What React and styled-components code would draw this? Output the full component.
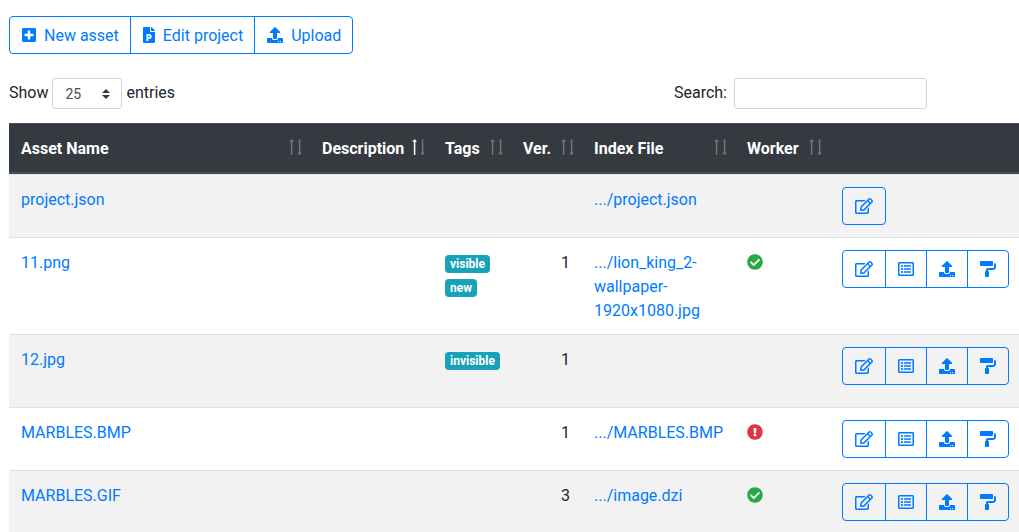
import React, { useState } from "react";
import styled, { createGlobalStyle, css } from "styled-components";
import {
  FaPlusSquare,
  FaFilePowerpoint,
  FaUpload,
  FaRegEdit,
  FaRegListAlt,
  FaPaintRoller,
  FaCheckCircle,
  FaExclamationCircle,
} from "react-icons/fa";

const GlobalStyle = createGlobalStyle`
  *, *::before, *::after { box-sizing: border-box; }
  html { scrollbar-width: none; }
  body {
    margin: 0;
    background: #fff;
    color: #212529;
    font: 400 16px/24px Roboto, "Liberation Sans", sans-serif;
  }
  button, input, select { font-family: inherit; }
`;

const Page = styled.main`
  padding: 16px 0 0 9px;
`;

const ButtonGroup = styled.div`
  display: inline-flex;
  vertical-align: top;
`;

const OutlineButton = styled.button`
  display: flex;
  align-items: center;
  gap: 8px;
  height: 38px;
  margin: 0;
  padding: 0 12px;
  border: 1px solid #007bff;
  background: transparent;
  color: #007bff;
  font-size: 16px;
  line-height: 24px;
  white-space: nowrap;
  cursor: pointer;

  & + & { margin-left: -1px; }
  &:first-child { border-top-left-radius: 4px; border-bottom-left-radius: 4px; }
  &:last-child { border-top-right-radius: 4px; border-bottom-right-radius: 4px; }

  svg { flex: none; width: ${(p) => p.$icon || 16}px; height: 16px; }
`;

const ToolbarButton = styled(OutlineButton)`
  padding-right: 11px;
`;

const ButtonText = styled.span`
  padding-top: 2px;
`;

const Controls = styled.div`
  display: flex;
  justify-content: space-between;
  align-items: center;
  margin: 24px 0 14px;
  padding-right: 92px;
`;

const ControlLabel = styled.label`
  display: flex;
  align-items: center;
  gap: ${(p) => p.$gap}px;
`;

const LabelText = styled.span`
  padding-bottom: 2px;
`;

const fieldStyle = css`
  height: 31px;
  border: 1px solid #ced4da;
  border-radius: 3px;
  background: #fff;
  color: #495057;
  font-size: 14px;
`;

const SelectBox = styled.span`
  display: grid;
  align-items: center;

  > * { grid-area: 1 / 1; }
  svg { justify-self: end; margin-right: 12px; pointer-events: none; }
`;

const LengthSelect = styled.select`
  ${fieldStyle}
  appearance: none;
  width: 70px;
  padding: 0 28px 0 12px;
`;

const SearchInput = styled.input`
  ${fieldStyle}
  width: 193px;
  padding: 4px 8px;
`;

const Table = styled.table`
  width: 100%;
  table-layout: fixed;
  border-collapse: separate;
  border-spacing: 0;
`;

const Col = styled.col`
  width: ${(p) => (p.$width ? `${p.$width}px` : "auto")};
`;

const HeadCell = styled.th`
  padding: 13px 7px 11px 12px;
  border-top: 1px solid #454d55;
  border-bottom: 2px solid #454d55;
  background: #343a40;
  color: #fff;
  text-align: left;
`;

const SortButton = styled.button`
  display: flex;
  justify-content: space-between;
  align-items: center;
  width: 100%;
  padding: 0;
  border: 0;
  background: none;
  color: inherit;
  font-size: 16px;
  font-weight: 700;
  line-height: 24px;
  white-space: nowrap;
  cursor: pointer;

  svg { flex: none; }
`;

const Row = styled.tr`
  background: #fff;
  &:nth-child(odd) { background: #f2f2f2; }
`;

const Cell = styled.td`
  padding: 13px 12px 11px;
  border-top: 1px solid #dee2e6;
  vertical-align: top;
  text-align: ${(p) => (p.$numeric ? "right" : "left")};
`;

const ActionCell = styled(Cell)`
  padding: 12px 10px 12px 12px;
`;

const Link = styled.a`
  color: #007bff;
  text-decoration: none;
`;

const TagList = styled.div`
  display: flex;
  flex-direction: column;
  align-items: flex-start;
  gap: 6px;
  min-height: 48px;
  padding-top: 4px;
`;

const Tag = styled.span`
  padding: 3px 5px;
  border-radius: 4px;
  background: #17a2b8;
  color: #fff;
  font-size: 12px;
  font-weight: 700;
  line-height: 12px;
`;

const Status = styled.span`
  display: flex;
  align-items: center;
  height: 22px;
  color: ${(p) => (p.$ok ? "#28a745" : "#dc3545")};
`;

function SortArrows({ active }) {
  return (
    <svg width="15" height="20" viewBox="0 0 15 20" fill="none" stroke="#fff" strokeWidth="1.5" aria-hidden="true">
      <g opacity={active ? 1 : 0.3}>
        <path d="M3.6 16V1" />
        <path d="M1.4 3L3 0.6H4.2L5.8 3Z" fill="#fff" stroke="none" />
      </g>
      <g opacity="0.3">
        <path d="M11.6 0.4V15" />
        <path d="M9.4 13.4L11 15.8H12.2L13.8 13.4Z" fill="#fff" stroke="none" />
      </g>
    </svg>
  );
}

const columns = [
  { label: "Asset Name" },
  { label: "Description", width: 123, active: true },
  { label: "Tags", width: 78 },
  { label: "Ver.", width: 71 },
  { label: "Index File", width: 153 },
  { label: "Worker", width: 95 },
];

const assets = [
  { name: "project.json", file: ".../project.json", editOnly: true },
  { name: "11.png", tags: ["visible", "new"], version: 1, file: ".../lion_king_2-wallpaper-1920x1080.jpg", status: "ok" },
  { name: "12.jpg", tags: ["invisible"], version: 1 },
  { name: "MARBLES.BMP", version: 1, file: ".../MARBLES.BMP", status: "error" },
  { name: "MARBLES.GIF", version: 3, file: ".../image.dzi", status: "ok" },
];

function AssetRow({ asset }) {
  const { name, tags, version, file, status, editOnly } = asset;
  return (
    <Row>
      <Cell><Link href="#">{name}</Link></Cell>
      <Cell />
      <Cell>{tags && <TagList>{tags.map((t) => <Tag key={t}>{t}</Tag>)}</TagList>}</Cell>
      <Cell $numeric>{version}</Cell>
      <Cell>{file && <Link href="#">{file}</Link>}</Cell>
      <Cell>
        {status && (
          <Status $ok={status === "ok"} role="img" aria-label={status}>
            {status === "ok" ? <FaCheckCircle /> : <FaExclamationCircle />}
          </Status>
        )}
      </Cell>
      <ActionCell>
        <ButtonGroup>
          <OutlineButton type="button" $icon={18} aria-label="Edit"><FaRegEdit /></OutlineButton>
          {!editOnly && (
            <>
              <OutlineButton type="button" aria-label="Details"><FaRegListAlt /></OutlineButton>
              <OutlineButton type="button" aria-label="Upload"><FaUpload /></OutlineButton>
              <OutlineButton type="button" aria-label="Paint"><FaPaintRoller /></OutlineButton>
            </>
          )}
        </ButtonGroup>
      </ActionCell>
    </Row>
  );
}

export default function App() {
  const [length, setLength] = useState("25");
  const [query, setQuery] = useState("");
  const shown = assets.filter((a) => a.name.toLowerCase().includes(query.toLowerCase()));

  return (
    <Page>
      <GlobalStyle />
      <ButtonGroup>
        <ToolbarButton type="button" $icon={14}><FaPlusSquare /><ButtonText>New asset</ButtonText></ToolbarButton>
        <ToolbarButton type="button" $icon={12}><FaFilePowerpoint /><ButtonText>Edit project</ButtonText></ToolbarButton>
        <ToolbarButton type="button"><FaUpload /><ButtonText>Upload</ButtonText></ToolbarButton>
      </ButtonGroup>
      <Controls>
        <ControlLabel $gap={4} htmlFor="length">
          <LabelText>Show</LabelText>
          <SelectBox>
            <LengthSelect id="length" value={length} onChange={(e) => setLength(e.target.value)}>
              <option>10</option>
              <option>25</option>
              <option>50</option>
              <option>100</option>
            </LengthSelect>
            <svg width="8" height="10" viewBox="0 0 4 5" fill="#343a40" aria-hidden="true">
              <path d="M2 0L0 2h4zm0 5L0 3h4z" />
            </svg>
          </SelectBox>
          <LabelText>entries</LabelText>
        </ControlLabel>
        <ControlLabel $gap={7} htmlFor="search">
          <LabelText>Search:</LabelText>
          <SearchInput id="search" type="search" value={query} onChange={(e) => setQuery(e.target.value)} />
        </ControlLabel>
      </Controls>
      <Table>
        <colgroup>
          {columns.map((c) => <Col key={c.label} $width={c.width} />)}
          <Col $width={189} />
        </colgroup>
        <thead>
          <tr>
            {columns.map((c) => (
              <HeadCell key={c.label} scope="col">
                <SortButton type="button">{c.label}<SortArrows active={c.active} /></SortButton>
              </HeadCell>
            ))}
            <HeadCell />
          </tr>
        </thead>
        <tbody>
          {shown.map((a) => <AssetRow key={a.name} asset={a} />)}
        </tbody>
      </Table>
    </Page>
  );
}
